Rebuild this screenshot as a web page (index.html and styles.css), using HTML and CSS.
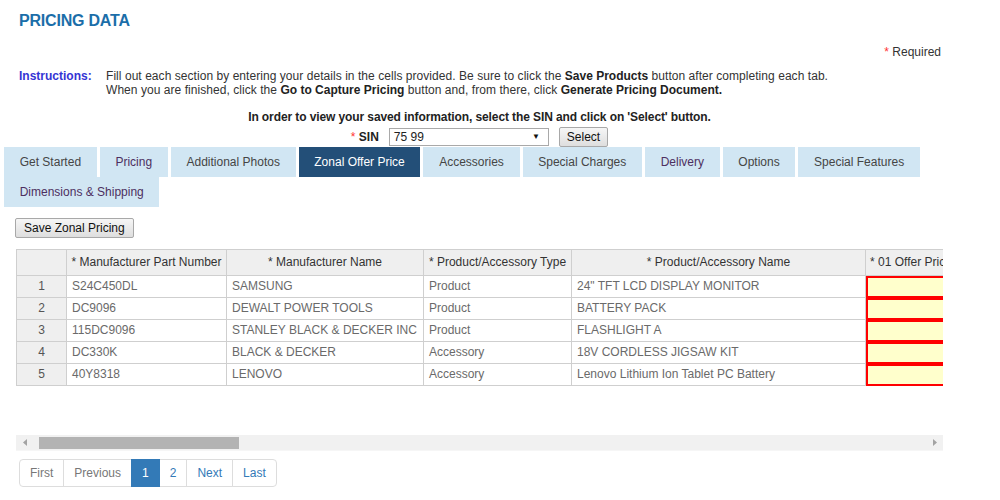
FILE: index.html
```html
<!DOCTYPE html>
<html lang="en">
<head>
<meta charset="utf-8">
<title>Pricing Data</title>
<link rel="stylesheet" href="styles.css">
</head>
<body>
<div class="page">
  <h1 class="title">PRICING DATA</h1>
  <div class="required"><span class="req">*</span> Required</div>
  <div class="instructions">
    <div class="instr-label">Instructions:</div>
    <div class="instr-text">Fill out each section by entering your details in the cells provided. Be sure to click the <b>Save Products</b> button after completing each tab.<br>When you are finished, click the <b>Go to Capture Pricing</b> button and, from there, click <b>Generate Pricing Document.</b></div>
  </div>
  <div class="content">
    <div class="view-note">In order to view your saved information, select the SIN and click on 'Select' button.</div>
    <div class="sin-row">
      <span class="sin-label"><span class="req">*</span> <b>SIN</b></span>
      <div class="select"><span>75 99</span><span class="caret">&#9660;</span></div>
      <button class="btn select-btn">Select</button>
    </div>
  </div>
  <ul class="tabs">
    <li class="tab">Get Started</li>
    <li class="tab visited">Pricing</li>
    <li class="tab">Additional Photos</li>
    <li class="tab active">Zonal Offer Price</li>
    <li class="tab">Accessories</li>
    <li class="tab">Special Charges</li>
    <li class="tab visited">Delivery</li>
    <li class="tab">Options</li>
    <li class="tab">Special Features</li>
    <li class="tab visited">Dimensions &amp; Shipping</li>
  </ul>
  <div class="content">
    <button class="btn save-btn">Save Zonal Pricing</button>
    <div class="table-wrap">
      <table class="grid">
        <thead>
          <tr>
            <th class="c-num"></th>
            <th class="c-part">* Manufacturer Part Number</th>
            <th class="c-mfr">* Manufacturer Name</th>
            <th class="c-type">* Product/Accessory Type</th>
            <th class="c-name">* Product/Accessory Name</th>
            <th class="c-offer">* 01 Offer Price</th>
          </tr>
        </thead>
        <tbody>
          <tr><td class="num">1</td><td>S24C450DL</td><td>SAMSUNG</td><td>Product</td><td>24" TFT LCD DISPLAY MONITOR</td><td class="offer"></td></tr>
          <tr><td class="num">2</td><td>DC9096</td><td>DEWALT POWER TOOLS</td><td>Product</td><td>BATTERY PACK</td><td class="offer"></td></tr>
          <tr><td class="num">3</td><td>115DC9096</td><td>STANLEY BLACK &amp; DECKER INC</td><td>Product</td><td>FLASHLIGHT A</td><td class="offer"></td></tr>
          <tr><td class="num">4</td><td>DC330K</td><td>BLACK &amp; DECKER</td><td>Accessory</td><td>18V CORDLESS JIGSAW KIT</td><td class="offer"></td></tr>
          <tr><td class="num">5</td><td>40Y8318</td><td>LENOVO</td><td>Accessory</td><td>Lenovo Lithium Ion Tablet PC Battery</td><td class="offer"></td></tr>
        </tbody>
      </table>
    </div>
    <div class="hscroll">
      <div class="arrow"><svg width="4" height="7" viewBox="0 0 4 7"><path d="M4 0 L0 3.5 L4 7 Z" fill="#a3a3a3"/></svg></div>
      <div class="track"><div class="thumb"></div></div>
      <div class="arrow"><svg width="4" height="7" viewBox="0 0 4 7"><path d="M0 0 L4 3.5 L0 7 Z" fill="#a3a3a3"/></svg></div>
    </div>
    <ul class="pagination">
      <li class="pg disabled">First</li>
      <li class="pg disabled">Previous</li>
      <li class="pg active">1</li>
      <li class="pg">2</li>
      <li class="pg">Next</li>
      <li class="pg">Last</li>
    </ul>
  </div>
</div>
</body>
</html>
```
FILE: styles.css
```css
html, body {
  margin: 0;
  padding: 0;
  background: #fff;
}
body {
  font-family: "Liberation Sans", Arial, sans-serif;
  font-size: 12px;
  color: #333;
}
.page {
  width: 937px;
  padding: 0 2px 0 4px;
}
.title {
  margin: 0 0 0 15px;
  padding-top: 11px;
  font-size: 16px;
  line-height: 20px;
  font-weight: bold;
  color: #1b6ea9;
  letter-spacing: -0.2px;
}
.req {
  color: #f33;
}
.required {
  margin-top: 14px;
  text-align: right;
  line-height: 14px;
}
.instructions {
  display: flex;
  margin-top: 10px;
  margin-left: 15px;
  line-height: 14px;
}
.instr-label {
  width: 87px;
  flex: none;
  font-weight: bold;
  color: #3434d4;
}
.instr-text {
  white-space: nowrap;
  letter-spacing: 0.05px;
}
.instr-text b {
  color: #222;
  letter-spacing: 0;
}
.content {
  margin-left: 12px;
  width: 927px;
}
.view-note {
  margin-top: 13px;
  text-align: center;
  font-weight: bold;
  line-height: 14px;
  color: #222;
  letter-spacing: -0.1px;
}
.sin-row {
  margin-top: 3px;
  display: flex;
  justify-content: center;
  align-items: center;
  height: 19px;
}
.sin-label {
  margin-right: 10px;
}
.sin-label b {
  color: #222;
}
.select {
  box-sizing: border-box;
  width: 160px;
  height: 18px;
  border: 1px solid #a9a9a9;
  background: #fff;
  display: flex;
  align-items: center;
  justify-content: space-between;
  padding: 0 8px 0 4px;
  color: #222;
  line-height: 16px;
}
.caret {
  font-size: 8px;
  color: #111;
}
.btn {
  font-family: "Liberation Sans", Arial, sans-serif;
  font-size: 12px;
  color: #111;
  border: 1px solid #a8a8a8;
  border-radius: 2px;
  background: linear-gradient(#f6f6f6, #dedede);
  line-height: 14px;
  margin: 0;
}
.select-btn {
  margin-left: 10px;
  height: 20px;
  padding: 2px 7px;
}
.tabs {
  list-style: none;
  margin: 1px 0 0 0;
  padding: 0;
  display: flex;
  flex-wrap: wrap;
  column-gap: 3px;
  row-gap: 0;
}
.tab {
  height: 30px;
  line-height: 30px;
  padding: 0 15.7px;
  background: #d1e6f3;
  color: #454545;
  white-space: nowrap;
}
.tab.visited {
  color: #4d2f60;
}
.tab.active {
  background: #234f78;
  color: #fff;
}
.save-btn {
  margin: 11px 0 0 -1px;
  height: 20px;
  padding: 2px 8px;
  display: block;
}
.table-wrap {
  margin-top: 11px;
  width: 927px;
  overflow: hidden;
}
.grid {
  border-collapse: separate;
  border-spacing: 0;
  table-layout: fixed;
  width: 970px;
  border-top: 1px solid #cfcfcf;
  border-left: 1px solid #cfcfcf;
}
.grid th, .grid td {
  box-sizing: border-box;
  border-right: 1px solid #cfcfcf;
  border-bottom: 1px solid #cfcfcf;
  white-space: nowrap;
  overflow: hidden;
  line-height: 14px;
}
.grid th {
  background: #efefef;
  font-weight: normal;
  color: #333;
  padding: 5px 4px 6px;
  text-align: center;
}
.grid td {
  padding: 3px 5px 4px;
  color: #6a6a6a;
}
.grid th.c-part, .grid th.c-type {
  padding-left: 3px;
  padding-right: 3px;
}
.grid th.c-offer {
  text-align: left;
  padding-left: 4px;
}
.c-num { width: 50px; }
.c-part { width: 160px; }
.c-mfr { width: 197px; }
.c-type { width: 148px; }
.c-name { width: 294px; }
.c-offer { width: 120px; }
.grid td.num {
  background: #efefef;
  text-align: center;
  color: #555;
}
.grid td.offer {
  background: #ffffcc;
  border-bottom-color: #f00;
  box-shadow: inset 2px 2px 0 #f00, inset 0 -1px 0 #f00;
}
.hscroll {
  margin-top: 49px;
  width: 927px;
  height: 16px;
  background: #f1f1f1;
  display: flex;
  border-bottom: 1px solid #f6f6f6;
  box-sizing: border-box;
}
.arrow {
  width: 17px;
  flex: none;
  display: flex;
  align-items: center;
  justify-content: center;
}
.track {
  flex: 1;
  padding-top: 2px;
}
.thumb {
  margin-left: 6px;
  width: 200px;
  height: 12px;
  background: #b3b3b3;
}
.pagination {
  list-style: none;
  margin: 8px 0 0 3px;
  padding: 0;
  display: flex;
}
.pg {
  padding: 5px 10px;
  line-height: 16px;
  border: 1px solid #dddddd;
  margin-left: -1px;
  color: #337ab7;
  background: #fff;
}
.pg:first-child {
  margin-left: 0;
  border-radius: 4px 0 0 4px;
}
.pg:last-child {
  border-radius: 0 4px 4px 0;
}
.pg.disabled {
  color: #777;
}
.pg.active {
  background: #337ab7;
  border-color: #337ab7;
  color: #fff;
  position: relative;
}
```
